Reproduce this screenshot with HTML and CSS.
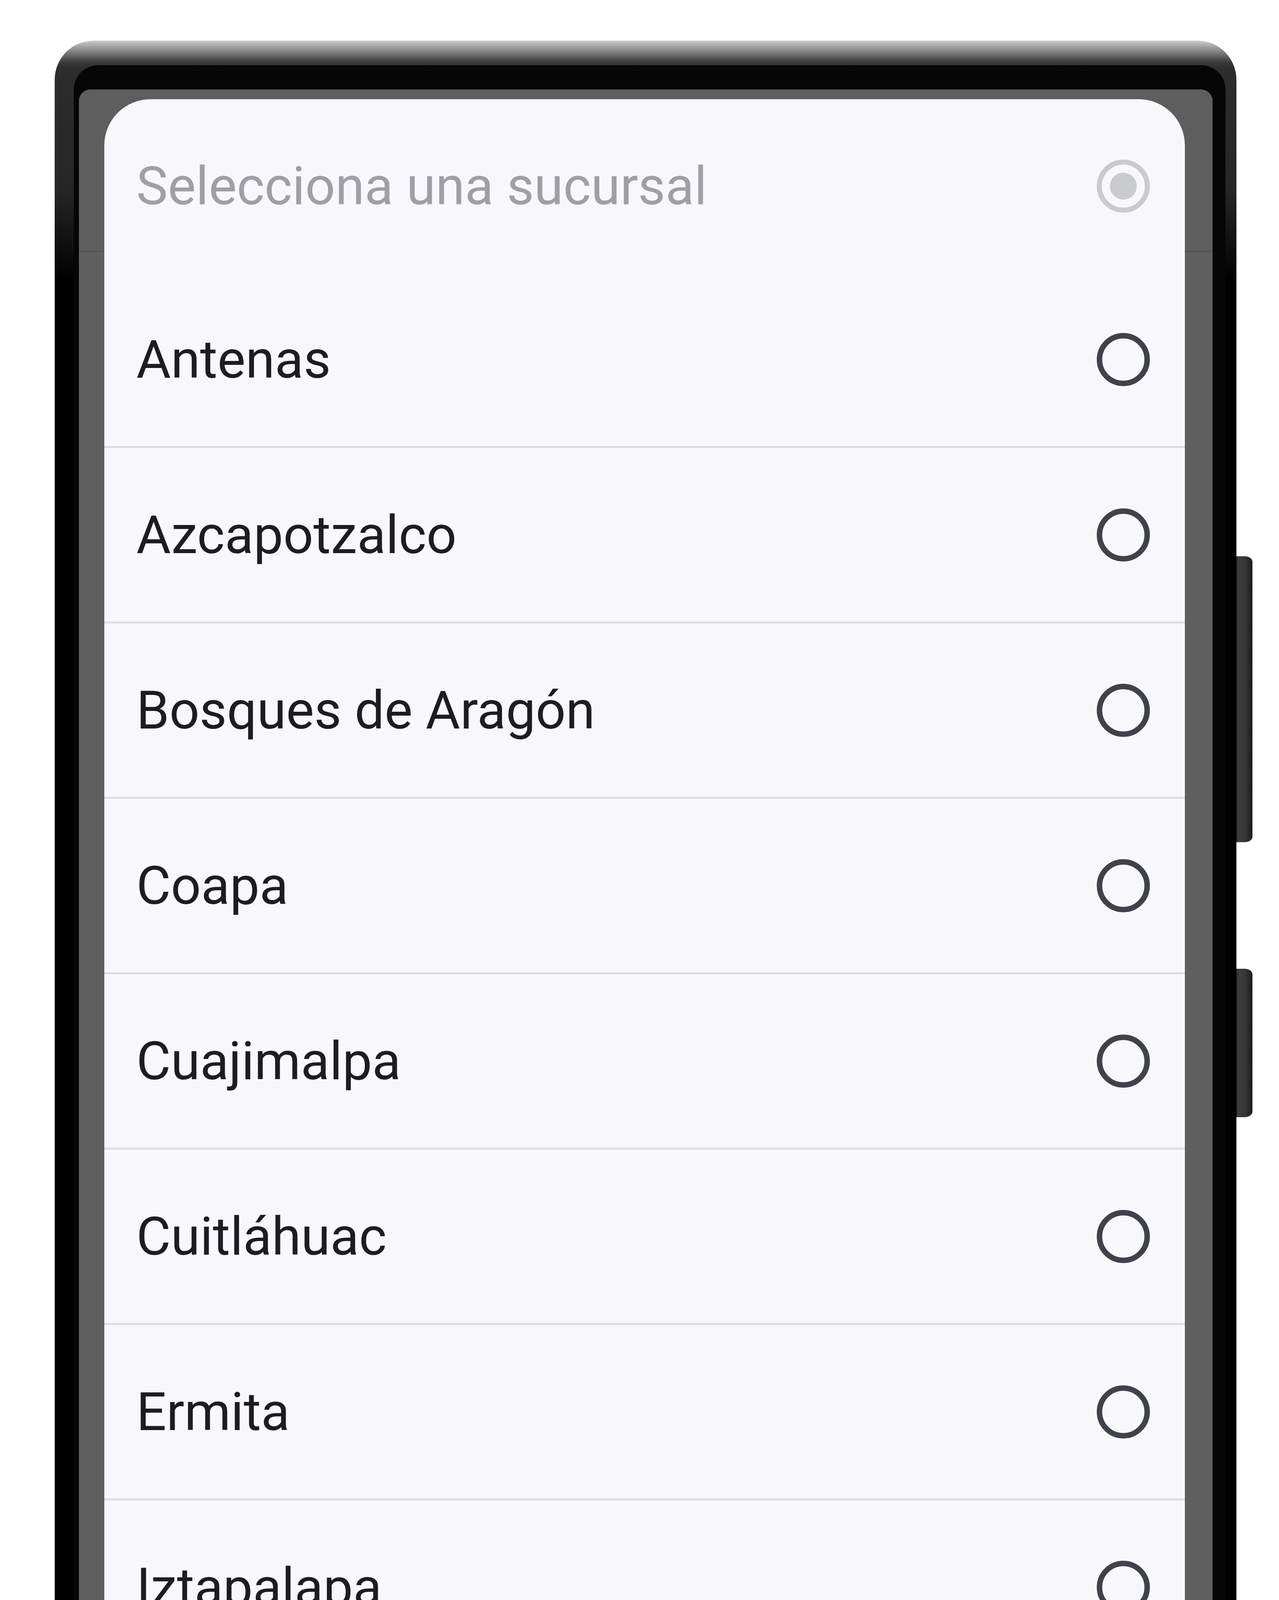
FILE: index.html
```html
<!DOCTYPE html>
<html lang="es">
<head>
<meta charset="utf-8">
<title>Selecciona una sucursal</title>
<link rel="stylesheet" href="styles.css">
</head>
<body>
<div class="stage">
  <div class="phone">
    <div class="side-btn side-btn-power"></div>
    <div class="side-btn side-btn-vol"></div>
    <div class="bezel">
      <div class="screen">
        <div class="appbar"></div>
        <div class="content"></div>
        <div class="navbar"></div>
        <div class="dialog">
          <div class="dialog-header">
            <span class="header-label">Selecciona una sucursal</span>
            <svg class="radio" viewBox="0 0 137 137" aria-hidden="true"><circle cx="68.5" cy="68.5" r="61.5" fill="none" stroke="#c9cbcf" stroke-width="13"/><circle cx="68.5" cy="68.5" r="34.5" fill="#c9cbcf"/></svg>
          </div>
          <div class="option"><span class="option-label">Antenas</span><svg class="radio" viewBox="0 0 137 137" aria-hidden="true"><circle cx="68.5" cy="68.5" r="61" fill="none" stroke="#3f424b" stroke-width="14"/></svg></div>
          <div class="option"><span class="option-label">Azcapotzalco</span><svg class="radio" viewBox="0 0 137 137" aria-hidden="true"><circle cx="68.5" cy="68.5" r="61" fill="none" stroke="#3f424b" stroke-width="14"/></svg></div>
          <div class="option"><span class="option-label">Bosques de Aragón</span><svg class="radio" viewBox="0 0 137 137" aria-hidden="true"><circle cx="68.5" cy="68.5" r="61" fill="none" stroke="#3f424b" stroke-width="14"/></svg></div>
          <div class="option"><span class="option-label">Coapa</span><svg class="radio" viewBox="0 0 137 137" aria-hidden="true"><circle cx="68.5" cy="68.5" r="61" fill="none" stroke="#3f424b" stroke-width="14"/></svg></div>
          <div class="option"><span class="option-label">Cuajimalpa</span><svg class="radio" viewBox="0 0 137 137" aria-hidden="true"><circle cx="68.5" cy="68.5" r="61" fill="none" stroke="#3f424b" stroke-width="14"/></svg></div>
          <div class="option"><span class="option-label">Cuitláhuac</span><svg class="radio" viewBox="0 0 137 137" aria-hidden="true"><circle cx="68.5" cy="68.5" r="61" fill="none" stroke="#3f424b" stroke-width="14"/></svg></div>
          <div class="option"><span class="option-label">Ermita</span><svg class="radio" viewBox="0 0 137 137" aria-hidden="true"><circle cx="68.5" cy="68.5" r="61" fill="none" stroke="#3f424b" stroke-width="14"/></svg></div>
          <div class="option"><span class="option-label">Iztapalapa</span><svg class="radio" viewBox="0 0 137 137" aria-hidden="true"><circle cx="68.5" cy="68.5" r="61" fill="none" stroke="#3f424b" stroke-width="14"/></svg></div>
          <div class="option"><span class="option-label">Las águilas</span><svg class="radio" viewBox="0 0 137 137" aria-hidden="true"><circle cx="68.5" cy="68.5" r="61" fill="none" stroke="#3f424b" stroke-width="14"/></svg></div>
          <div class="option"><span class="option-label">Loreto</span><svg class="radio" viewBox="0 0 137 137" aria-hidden="true"><circle cx="68.5" cy="68.5" r="61" fill="none" stroke="#3f424b" stroke-width="14"/></svg></div>
          <div class="option"><span class="option-label">Pabellón Cuauhtémoc</span><svg class="radio" viewBox="0 0 137 137" aria-hidden="true"><circle cx="68.5" cy="68.5" r="61" fill="none" stroke="#3f424b" stroke-width="14"/></svg></div>
          <div class="option"><span class="option-label">Pabellón del Valle</span><svg class="radio" viewBox="0 0 137 137" aria-hidden="true"><circle cx="68.5" cy="68.5" r="61" fill="none" stroke="#3f424b" stroke-width="14"/></svg></div>
          <div class="option"><span class="option-label">Parque Lindavista</span><svg class="radio" viewBox="0 0 137 137" aria-hidden="true"><circle cx="68.5" cy="68.5" r="61" fill="none" stroke="#3f424b" stroke-width="14"/></svg></div>
        </div>
      </div>
    </div>
  </div>
</div>
</body>
</html>
```

FILE: styles.css
```css
html, body {
  margin: 0;
  padding: 0;
  background: #ffffff;
}

body {
  width: 3274px;
  height: 6533px;
  overflow: hidden;
  font-family: Roboto, "Noto Sans", "Liberation Sans", sans-serif;
}

.stage {
  display: flex;
  padding: 104px 0 0 140px;
}

.phone {
  position: relative;
  width: 3025px;
  box-sizing: border-box;
  padding: 63px 28px 71px 49px;
  border-radius: 100px;
  background: linear-gradient(180deg,
    #cbcbcb 0px,
    #3c3c3c 55px,
    #2d2d2d 70px,
    #262626 380px,
    #000000 620px,
    #000000 calc(100% - 58px),
    #8c8c8c calc(100% - 24px),
    #dcdcdc 100%);
}

.side-btn {
  position: absolute;
  left: 100%;
  width: 41px;
  border-radius: 0 50% 50% 0 / 0 14px 14px 0;
  background: linear-gradient(90deg, #2a2a2a 0, #3d3d3d 12%, #363636 55%, #1c1c1c 100%);
}

.side-btn-power {
  top: 1320px;
  height: 732px;
}

.side-btn-vol {
  top: 2376px;
  height: 380px;
}

.bezel {
  background: #050605;
  border-radius: 62px;
  padding: 62px 33px 55px 13px;
}

.screen {
  position: relative;
  width: 2902px;
  height: 6091px;
  border-radius: 30px;
  overflow: hidden;
  background: #5f5f5f;
  display: flex;
  flex-direction: column;
}

.appbar {
  height: 412px;
  flex: none;
  background: #5e5e5f;
  border-bottom: 5px solid #565657;
}

.content {
  flex: 1;
  background: #5f5f5f;
}

.navbar {
  flex: none;
  height: 373px;
  background: #141517;
}

.dialog {
  position: absolute;
  top: 25px;
  left: 65px;
  width: 2766px;
  height: 6121px;
  border-radius: 118px;
  background: #f8f8fc;
  overflow: hidden;
  display: flex;
  flex-direction: column;
}

.dialog-header,
.option {
  flex: none;
  display: flex;
  align-items: center;
  justify-content: space-between;
  box-sizing: border-box;
  padding: 0 89px 0 82px;
  font-size: 135.5px;
}

.dialog-header {
  height: 444px;
}

.option {
  height: 449px;
  border-bottom: 5px solid #dcdce1;
}

.header-label {
  color: #9ea0a6;
}

.option-label {
  color: #1c1d22;
}

.radio {
  width: 137px;
  height: 137px;
  flex: none;
  display: block;
}
```
